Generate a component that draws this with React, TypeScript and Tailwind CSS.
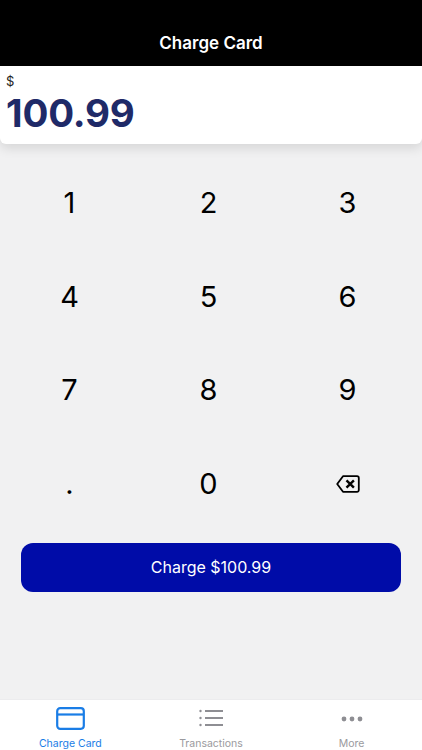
const keys = ["1", "2", "3", "4", "5", "6", "7", "8", "9", ".", "0"];

function BackspaceIcon() {
  return (
    <svg width="24" height="18" viewBox="0 0 24 18" fill="none" stroke="#000" strokeWidth="1.8">
      <path d="M7 1.2H21a1.8 1.8 0 0 1 1.8 1.8v12a1.8 1.8 0 0 1-1.8 1.8H7L1.2 9z" strokeLinejoin="round" />
      <path d="M10.5 5.3l7.4 7.4M17.9 5.3l-7.4 7.4" strokeWidth="2.4" />
    </svg>
  );
}

function CardIcon() {
  return (
    <svg width="29" height="23" viewBox="0 0 29 23" fill="none" stroke="#1a7de6" strokeWidth="2.2">
      <rect x="1.2" y="1.2" width="26.6" height="20.6" rx="3" />
      <path d="M1.2 7.5h26.6" />
    </svg>
  );
}

function ListIcon() {
  return (
    <svg width="24" height="20" viewBox="0 0 24 20" fill="#8e8e93">
      <circle cx="1.5" cy="3" r="1.2" />
      <circle cx="1.5" cy="10" r="1.2" />
      <circle cx="1.5" cy="17" r="1.2" />
      <rect x="6" y="2" width="18" height="2" />
      <rect x="6" y="9" width="18" height="2" />
      <rect x="6" y="16" width="18" height="2" />
    </svg>
  );
}

function MoreIcon() {
  return (
    <svg width="22" height="6" viewBox="0 0 22 6" fill="#8e8e93">
      <circle cx="3" cy="3" r="2.4" />
      <circle cx="11" cy="3" r="2.4" />
      <circle cx="19" cy="3" r="2.4" />
    </svg>
  );
}

export default function App() {
  return (
    <div className="w-[422px] h-[750px] flex flex-col bg-[#f1f1f2] font-['Inter',sans-serif] overflow-hidden">
      <div className="h-[66px] shrink-0 bg-black flex items-end justify-center pb-[13px]">
        <span className="text-white text-[17px] leading-[20px] font-semibold">Charge Card</span>
      </div>

      <div className="h-[78px] shrink-0 bg-white rounded-b-[6px] shadow-[0_4px_12px_rgba(0,0,0,0.12)] px-[6px] pt-[8px]">
        <div className="text-[13px] leading-[15px] text-[#222]">$</div>
        <div className="mt-[1px] text-[38.5px] leading-[46px] font-bold text-[#1f2a68] tracking-[-0.2px]">100.99</div>
      </div>

      <div className="grid grid-cols-3 w-[417px] pt-[12px]">
        {keys.map((k) => (
          <div key={k} className="h-[93.7px] flex items-center justify-center">
            <span className="text-[29px] leading-[34px] text-black">{k}</span>
          </div>
        ))}
        <div className="h-[93.7px] flex items-center justify-center">
          <BackspaceIcon />
        </div>
      </div>

      <div className="px-[21px] mt-[12px]">
        <button className="w-full h-[49px] rounded-[12px] bg-[#000ca8] text-white text-[16px]">Charge $100.99</button>
      </div>

      <div className="mt-auto h-[51px] shrink-0 bg-white border-t border-[#ececee] grid grid-cols-3">
        <div className="flex flex-col items-center justify-end">
          <CardIcon />
          <span className="mt-[7px] text-[10.5px] leading-[13px] text-[#1a7de6]">Charge Card</span>
        </div>
        <div className="flex flex-col items-center justify-end">
          <ListIcon />
          <span className="mt-[9px] text-[10.5px] leading-[13px] text-[#9a9a9e]">Transactions</span>
        </div>
        <div className="flex flex-col items-center justify-end">
          <MoreIcon />
          <span className="mt-[15px] text-[10.5px] leading-[13px] text-[#9a9a9e]">More</span>
        </div>
      </div>
    </div>
  );
}
